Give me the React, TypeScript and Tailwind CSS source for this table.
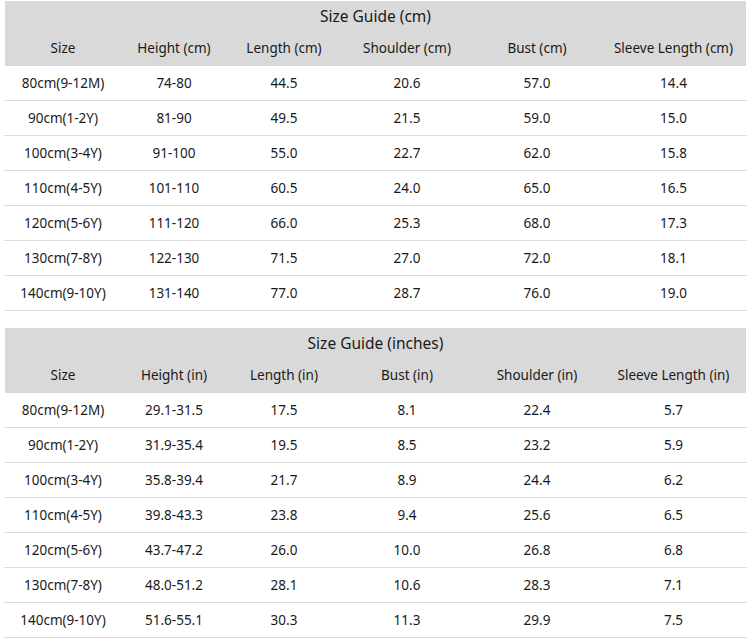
const cols = "grid grid-cols-[116px_106px_114px_132px_128px_145px]";

type Guide = {
  title: string;
  headers: string[];
  rows: string[][];
};

const guides: Guide[] = [
  {
    title: "Size Guide (cm)",
    headers: ["Size", "Height (cm)", "Length (cm)", "Shoulder (cm)", "Bust (cm)", "Sleeve Length (cm)"],
    rows: [
      ["80cm(9-12M)", "74-80", "44.5", "20.6", "57.0", "14.4"],
      ["90cm(1-2Y)", "81-90", "49.5", "21.5", "59.0", "15.0"],
      ["100cm(3-4Y)", "91-100", "55.0", "22.7", "62.0", "15.8"],
      ["110cm(4-5Y)", "101-110", "60.5", "24.0", "65.0", "16.5"],
      ["120cm(5-6Y)", "111-120", "66.0", "25.3", "68.0", "17.3"],
      ["130cm(7-8Y)", "122-130", "71.5", "27.0", "72.0", "18.1"],
      ["140cm(9-10Y)", "131-140", "77.0", "28.7", "76.0", "19.0"],
    ],
  },
  {
    title: "Size Guide (inches)",
    headers: ["Size", "Height (in)", "Length (in)", "Bust (in)", "Shoulder (in)", "Sleeve Length (in)"],
    rows: [
      ["80cm(9-12M)", "29.1-31.5", "17.5", "8.1", "22.4", "5.7"],
      ["90cm(1-2Y)", "31.9-35.4", "19.5", "8.5", "23.2", "5.9"],
      ["100cm(3-4Y)", "35.8-39.4", "21.7", "8.9", "24.4", "6.2"],
      ["110cm(4-5Y)", "39.8-43.3", "23.8", "9.4", "25.6", "6.5"],
      ["120cm(5-6Y)", "43.7-47.2", "26.0", "10.0", "26.8", "6.8"],
      ["130cm(7-8Y)", "48.0-51.2", "28.1", "10.6", "28.3", "7.1"],
      ["140cm(9-10Y)", "51.6-55.1", "30.3", "11.3", "29.9", "7.5"],
    ],
  },
];

function GuideTable({ guide }: { guide: Guide }) {
  return (
    <div className="w-[743px]">
      <div className="mx-[1px] bg-[#d9d9d9]">
        <div className="flex h-[32px] items-center justify-center pb-[1px] text-[15.5px]">{guide.title}</div>
        <div className={`${cols} h-[33px] items-center pb-[2px]`}>
          {guide.headers.map((h) => (
            <div key={h} className="text-center">
              {h}
            </div>
          ))}
        </div>
      </div>
      {guide.rows.map((row) => (
        <div key={row[0]} className={`${cols} h-[35px] items-center border-b border-[#dcdcdc] pl-[1px]`}>
          {row.map((cell, i) => (
            <div key={i} className="text-center">
              {cell}
            </div>
          ))}
        </div>
      ))}
    </div>
  );
}

export default function App() {
  return (
    <div
      className="flex h-[640px] w-[751px] flex-col gap-[17px] bg-white pl-[4px] pt-[1px] text-[13.5px] text-[#1a1a1a]"
      style={{ fontFamily: '"Noto Sans", "Open Sans", sans-serif' }}
    >
      {guides.map((g) => (
        <GuideTable key={g.title} guide={g} />
      ))}
    </div>
  );
}
